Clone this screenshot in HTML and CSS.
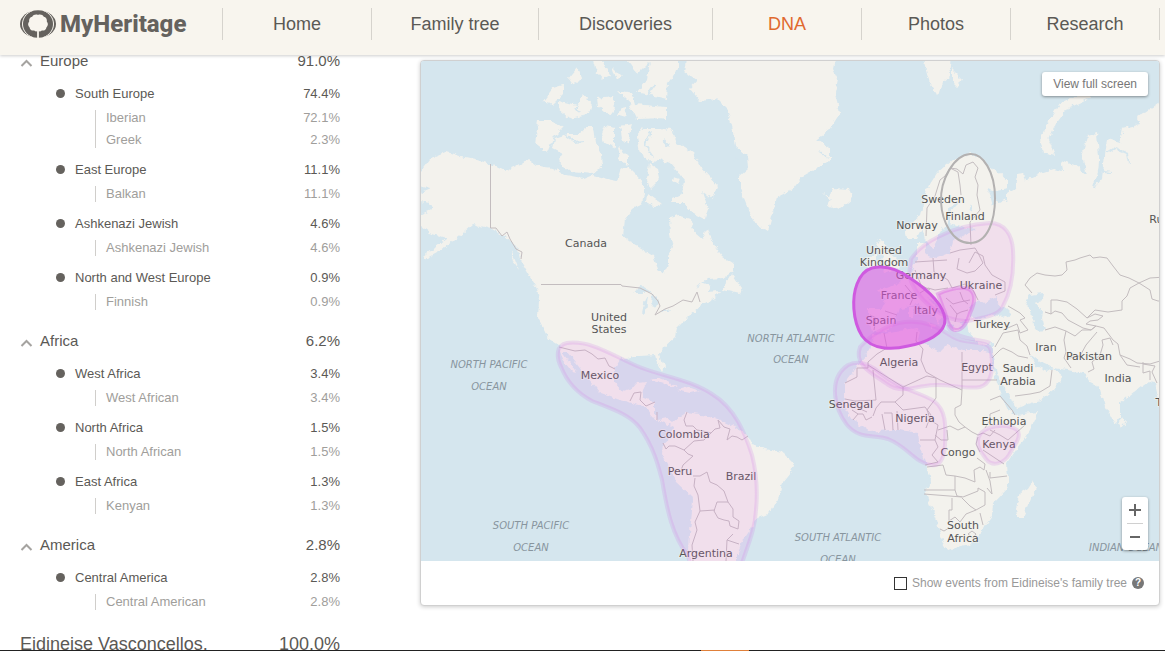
FILE: index.html
```html
<!DOCTYPE html>
<html lang="en">
<head>
<meta charset="utf-8">
<meta name="viewport" content="width=device-width, initial-scale=1">
<title>MyHeritage DNA – Ethnicity Estimate</title>
<link rel="stylesheet" href="styles.css">
</head>
<body>
<header class="topbar">
  <a class="logo" href="#" aria-label="MyHeritage">
    <svg class="logo-mark" viewBox="0 0 36 28" aria-hidden="true">
      <ellipse cx="18" cy="14" rx="18" ry="13.800" fill="#65625e"/>
      <path fill="none" stroke="#f8f5ee" stroke-width="1" d="M13 .4C-1 5.500-1 22.500 13 27.600M23 .4C37 5.500 37 22.500 23 27.600"/>
      <path fill="#f8f5ee" d="M18 5C20 3.900 22.800 4.800 23.800 6.800C26 7.200 27.400 9.400 26.800 11.600C28.400 13.200 28.200 16 26.400 17.400C26.200 19.600 24 21 21.800 20.400C20.900 21.400 19.800 21.600 18.900 21.300V28H17.100V21.300C16.200 21.600 15.100 21.400 14.200 20.400C12 21 9.800 19.600 9.600 17.400C7.800 16 7.600 13.200 9.200 11.600C8.600 9.400 10 7.200 12.200 6.800C13.200 4.800 16 3.900 18 5Z"/>
    </svg>
    <span class="logo-text">MyHeritage</span>
  </a>
  <nav class="nav">
    <a class="nav-item" href="#">Home</a>
    <a class="nav-item wide" href="#">Family tree</a>
    <a class="nav-item wider" href="#">Discoveries</a>
    <a class="nav-item active" href="#">DNA</a>
    <a class="nav-item" href="#">Photos</a>
    <a class="nav-item" href="#">Research</a>
  </nav>
</header>

<main class="content">
  <div class="estimate">
    <section class="continent">
      <h2 class="row continent-head"><button class="toggle"><svg class="chevron" viewBox="0 0 12 8" aria-hidden="true"><path d="M1 7L6 2L11 7"/></svg>Europe</button><span>91.0%</span></h2>
      <div class="group">
        <h3 class="row region"><span>South Europe</span><span>74.4%</span></h3>
        <ul class="ethnicities"><li class="row"><span>Iberian</span><span>72.1%</span></li><li class="row"><span>Greek</span><span>2.3%</span></li></ul>
      </div>
      <div class="group">
        <h3 class="row region"><span>East Europe</span><span>11.1%</span></h3>
        <ul class="ethnicities"><li class="row"><span>Balkan</span><span>11.1%</span></li></ul>
      </div>
      <div class="group">
        <h3 class="row region"><span>Ashkenazi Jewish</span><span>4.6%</span></h3>
        <ul class="ethnicities"><li class="row"><span>Ashkenazi Jewish</span><span>4.6%</span></li></ul>
      </div>
      <div class="group">
        <h3 class="row region"><span>North and West Europe</span><span>0.9%</span></h3>
        <ul class="ethnicities"><li class="row"><span>Finnish</span><span>0.9%</span></li></ul>
      </div>
    </section>
    <section class="continent">
      <h2 class="row continent-head"><button class="toggle"><svg class="chevron" viewBox="0 0 12 8" aria-hidden="true"><path d="M1 7L6 2L11 7"/></svg>Africa</button><span>6.2%</span></h2>
      <div class="group">
        <h3 class="row region"><span>West Africa</span><span>3.4%</span></h3>
        <ul class="ethnicities"><li class="row"><span>West African</span><span>3.4%</span></li></ul>
      </div>
      <div class="group">
        <h3 class="row region"><span>North Africa</span><span>1.5%</span></h3>
        <ul class="ethnicities"><li class="row"><span>North African</span><span>1.5%</span></li></ul>
      </div>
      <div class="group">
        <h3 class="row region"><span>East Africa</span><span>1.3%</span></h3>
        <ul class="ethnicities"><li class="row"><span>Kenyan</span><span>1.3%</span></li></ul>
      </div>
    </section>
    <section class="continent">
      <h2 class="row continent-head"><button class="toggle"><svg class="chevron" viewBox="0 0 12 8" aria-hidden="true"><path d="M1 7L6 2L11 7"/></svg>America</button><span>2.8%</span></h2>
      <div class="group">
        <h3 class="row region"><span>Central America</span><span>2.8%</span></h3>
        <ul class="ethnicities"><li class="row"><span>Central American</span><span>2.8%</span></li></ul>
      </div>
    </section>
    <p class="row total"><span>Eidineise Vasconcellos,</span><span>100.0%</span></p>
  </div>

  <section class="map-card">
    <div class="map">
      <svg class="map-svg" viewBox="421 61 738 500" preserveAspectRatio="xMidYMin slice" role="img" aria-label="Ethnicity map">
        <defs>
          <filter id="coast" x="0" y="0" width="100%" height="100%">
            <feTurbulence type="fractalNoise" baseFrequency="0.16" numOctaves="3" seed="4" result="n"/>
            <feDisplacementMap in="SourceGraphic" in2="n" scale="6" xChannelSelector="R" yChannelSelector="G"/>
          </filter>
        </defs>
        <g filter="url(#coast)">
          <rect x="411" y="51" width="758" height="520" fill="#d5e6ee"/>
          <g class="land">
            <!-- North and Central America, South America -->
            <path d="M411 175L421 171L430 159L447 152L460 156L475 159L490 164L505 171L517 166L528 159L537 166L553 168L567 176L583 179L593 175L607 179L617 181L620 171L627 166L637 176L644 184L644 193L642 203L633 209L625 219L623 236L637 246L653 256L658 269L665 274L668 264L668 256L673 249L670 233L669 218L680 216L690 219L695 233L702 239L708 228L713 243L722 256L733 263L733 271L723 278L707 279L696 288L705 283L710 285L708 292L720 291L715 298L703 304L700 307L690 315L683 322L677 328L675 337L663 348L660 355L664 367L662 371L657 362L655 355L640 356L633 356L620 360L615 368L615 383L622 391L633 388L637 383L647 382L643 390L642 397L655 402L655 415L658 420L667 418L673 423L680 417L687 412L707 415L720 420L737 428L747 435L752 445L770 450L783 453L793 463L790 473L782 483L778 500L770 512L758 517L750 530L740 545L737 553L737 571L688 571L690 533L693 500L692 497L677 483L667 463L662 453L663 443L670 437L672 427L665 423L655 420L653 417L647 408L633 403L620 400L600 393L592 383L583 372L567 352L562 352L577 373L572 372L563 360L558 345L550 340L545 330L538 317L539 300L537 288L520 259L517 246L507 238L492 229L473 224L463 233L453 241L440 251L423 260L423 257L440 244L447 238L430 233L421 226L421 214L433 209L430 203L421 201L411 201L421 193L430 189L411 183Z"/>
            <!-- Canadian Arctic -->
            <path d="M555 138L567 134L580 134L587 128L593 128L595 143L602 156L603 166L593 173L570 171L558 161L563 153L553 148ZM538 121L553 121L563 128L553 138L547 153L535 144ZM543 101L553 88L563 85L563 94L553 104ZM558 101L577 106L582 94L592 106L590 114L570 119L558 109ZM568 79L577 68L582 79L572 85ZM592 55L602 61L610 76L603 79L595 69ZM612 66L622 76L617 81ZM597 98L613 96L615 109L610 116L598 106ZM618 90L632 93L635 104L665 107L665 118L637 119L627 99ZM623 55L638 74L650 62L647 79L637 92L667 99L668 83L678 69L678 50ZM605 126L615 128L615 148L605 143L602 134ZM620 126L633 124L627 144L622 139ZM618 146L628 156L628 164L620 161ZM650 164L658 169L660 179L650 189L647 179ZM648 194L662 204L653 208L647 203ZM621 107L626 109L625 117L618 115ZM661 107L666 108L666 119L660 118Z"/>
            <path d="M643 128L660 128L673 131L677 143L693 153L702 169L717 186L712 199L702 191L708 209L705 219L690 211L683 203L670 203L672 198L683 193L685 181L670 163L660 159L653 163L640 153L637 136Z"/>
            <path d="M674 176L680 178L678 184L673 181ZM732 274L742 289L740 293L723 289ZM650 380L660 378L677 385L673 387ZM677 390L688 387L700 391L690 393ZM511 250L515 260L519 270L513 262Z"/>
            <!-- Greenland, Iceland, Svalbard, Novaya Zemlya -->
            <path d="M688 50L685 73L697 81L690 89L700 101L717 99L727 109L732 126L735 146L747 156L748 169L740 176L740 189L748 209L757 224L768 231L772 216L777 198L793 189L803 176L830 161L830 149L817 139L830 129L840 113L835 93L838 79L833 69L837 50ZM823 193L830 196L832 188L850 189L853 198L840 209L828 206L831 200Z"/>
            <path d="M922 55L952 55L950 76L942 83L938 96L930 84ZM952 69L962 79L957 88L952 83ZM1040 138L1050 119L1060 103L1073 97L1088 94L1090 98L1067 109L1053 128L1048 139L1055 156L1043 153Z"/>
            <!-- Europe and Asia -->
            <path d="M907 238L905 229L920 216L927 189L937 173L953 159L970 154L983 159L987 166L997 171L1008 181L1008 189L997 191L987 188L992 198L1000 203L1007 199L1007 193L1015 188L1017 174L1023 173L1025 181L1040 173L1053 169L1063 171L1061 160L1077 166L1087 174L1082 156L1088 136L1097 133L1099 156L1099 173L1094 188L1102 179L1105 156L1107 139L1120 143L1123 128L1140 124L1137 118L1159 103L1172 100L1172 410L1159 400L1155 383L1147 382L1140 387L1120 403L1120 417L1115 423L1105 407L1099 387L1090 383L1085 373L1068 370L1053 368L1040 362L1030 354L1036 366L1047 371L1052 368L1063 377L1053 390L1040 400L1017 408L1007 393L997 373L993 357L993 343L980 345L973 338L968 330L967 320L962 322L960 330L955 332L950 320L943 310L933 300L928 298L935 306L945 317L940 318L939 325L933 315L923 307L917 305L900 308L897 317L890 330L880 332L870 330L868 313L868 308L883 308L887 300L877 290L887 288L900 282L910 273L917 260L917 243L925 243L927 256L937 258L950 253L953 241L963 236L977 229L960 227L950 224L950 213L962 199L955 203L947 209L947 223L937 238L932 248L925 239L922 229L917 238Z"/>
            <path d="M876 246L880 239L885 241L885 249L895 258L900 268L885 272L882 262L884 256ZM868 258L877 254L877 266L868 268ZM926 322L936 324L933 329ZM909 308L914 308L913 318L909 318Z"/>
            <!-- Africa, Madagascar, Sri Lanka -->
            <path d="M873 335L890 333L915 328L920 332L918 340L930 347L940 352L947 345L963 350L983 350L990 353L992 365L997 383L1003 400L1008 410L1017 415L1038 412L1030 430L1007 463L1008 477L1008 487L993 503L992 517L983 530L970 545L947 550L943 543L935 517L925 493L931 480L927 465L920 447L918 433L900 430L890 430L870 432L853 420L845 407L845 383L857 367L868 353Z"/>
            <path d="M1033 480L1036 487L1023 518L1017 518L1016 507L1020 493L1028 488ZM1122 417L1126 423L1122 428L1119 423Z"/>
          </g>
          <g fill="#d5e6ee">
            <path d="M1030 295L1043 293L1042 300L1035 302L1043 312L1042 317L1045 330L1038 331L1033 325L1032 315L1025 303Z"/>
            <path d="M971 305L978 300L985 304L992 299L998 297L996 304L1006 309L1012 315L1002 318L990 315L980 319L970 317Z"/>
            <path d="M632 293L643 286L652 292L643 293ZM645 299L648 296L646 312L642 314ZM652 293L659 300L655 309L651 303ZM660 312L670 309L668 312ZM988 191L997 204L992 205Z"/>
          </g>
          <g class="water-line">
            <path d="M1099 140L1101 150L1099 172L1094 188M1107 153L1115 148L1127 153L1129 163M1103 171L1112 172M970 211L972 204M650 132L645 145L653 156M655 85L648 95M580 112L576 107"/>
            <path d="M563 134L574 142L585 141M663 140L668 145M745 157L735 160M819 152L828 158"/>
          </g>
        </g>
        <!-- Country borders -->
        <g class="borders">
          <path d="M490.500 164V228L496 228L502 236L507 232L510 239L516 249L522 252L521 259M541 284.500H621L622 286L640 288L652 294L658 301L660 306L655 315L665 309L673 306L683 300L692 302L697 292L700 302M559 347L575 351L585 350L592 354L598 359L605 358L609 366L615 369"/>
          <path d="M630 401L634 393L641 392L640 400L646 406L655 402M657 420V412"/>
          <path d="M687 412L684 420L686 426L693 426L697 430L703 431L711 433L715 429L720 428L718 420L724 427L730 429L727 440L732 436L737 437L742 440L748 436M663 443L666 449L669 446L675 446L684 450L688 454L693 456L683 465L680 473M684 450L694 441L704 440L711 433M693 476L700 476L707 472L710 482L717 485L724 491L728 502L717 502L714 511L718 518L724 520L729 521L730 526L738 529L739 521L733 517L733 509L728 502M695 478L694 486L698 495L700 511L715 510M700 511L695 522L697 530L692 545L693 561M733 534L727 540L739 544M727 540L726 561"/>
          <path d="M926 236L927 208L935 196L940 180L945 176L950 168L958 172L960 185L961 195M950 168L957 169L963 174L966 165L973 162L978 168L975 177L978 185L977 195L980 210L970 222L971 245M933 258L934 272L940 275M915 262L947 260M950 253L960 250L975 248L978 253L983 263L975 271L967 273L957 269L959 258M969 263L975 252L983 256L985 265L992 275L1005 282L1005 291L995 295M940 275L948 280L952 288L965 284L973 290L978 300M915 270L921 285L930 290M905 285L914 296L910 305M920 293L928 288L935 290L948 288"/>
          <path d="M885 311L897 315M870 315L876 318L874 330M946 298L953 304L960 302L970 300M950 305L957 314L961 312L968 310M960 292L963 300L968 304M957 314L955 322"/>
          <path d="M884 333L887 348L877 354L868 362V368H857V377L845 383M917 332L916 341L923 349L921 360L926 372L940 380L962 390V352M868 365L903 387L927 376L936 378M873 370L876 400L855 401M962 380H997M962 390L961 405L955 408V415L959 422L965 427L972 432M936 378L936 398L927 410L929 415M903 387V395L895 402L903 410L925 407L931 415L926 428M845 399L855 401L858 408L867 412"/>
          <path d="M853 420L858 414L863 414L866 420L872 417M858 414L852 410M873 416L876 408L881 402L895 402M882 414L885 430M884 413H892L893 430M897 411L898 430M928 413L930 420L938 425L935 440M938 430L950 426L958 430L965 427M935 435L941 440L948 440L947 430M920 440H935L938 447L932 455L938 462L925 465M972 432L978 435L983 433L990 436L995 430M1000 410L990 414V420L985 428M990 400L1000 396L1012 410L1015 415M990 430L1000 435L1008 440L1025 425M978 437L976 444L980 452M983 450L1004 464"/>
          <path d="M927 467L943 465L946 475L955 476V490H924M955 476L965 478L975 482L974 470L980 467L984 470L985 464L977 458M990 472L990 478L1007 476M955 490L957 496L963 497L978 491L978 488L985 492L985 505L976 510L970 506L962 498M924 494L962 497M952 498V510H949V521M949 521L955 517L960 522L966 514L976 510M940 529L944 531L949 528M980 513L983 525M968 534L972 531L976 534L973 538ZM986 470L990 481L992 494L987 488"/>
          <path d="M1032 293L1025 285L1030 278L1037 273L1045 275L1055 276L1062 275L1067 270L1066 262L1075 260L1080 258L1090 255L1093 258L1100 257L1107 258L1113 266L1120 275L1129 278L1139 283L1130 288L1127 296L1122 301V310L1108 312L1095 310L1087 318L1077 309L1067 302L1057 300L1051 300V314L1045 312M1139 283L1150 278L1165 277M1139 283L1150 290L1152 299L1158 301L1165 301M1051 314L1055 311L1062 313L1068 320L1083 328L1091 330L1096 326L1104 328L1113 340L1118 344L1120 355L1130 359L1137 363L1150 364L1160 361M1120 355L1127 365L1140 367M1045 330L1055 327L1066 331L1075 336L1082 330L1091 330L1096 326M1066 331L1064 340L1066 352L1064 358L1071 368M1069 358L1080 356L1086 345L1097 332"/>
          <path d="M1088 372L1094 369L1092 362L1100 355L1103 345L1102 340L1110 338L1113 345M1003 330L1010 327L1017 324L1020 333L1028 330M1008 306L1020 313L1025 318L1020 320L1028 330M995 347L1003 333L1018 330L1020 340L1027 346L1030 355M992 358L1000 350L1003 348L1012 352L1018 356L1028 358M1015 396L1030 394L1040 392L1050 386L1052 370M1143 362V373L1150 371V380M1143 364L1155 366L1152 372L1157 383M1087 318L1095 314L1103 316L1098 320L1090 321L1086 324L1096 326"/>
        </g>
        <g class="places">
          <text x="586" y="247">Canada</text>
          <text x="609" y="321">United<tspan x="609" dy="12">States</tspan></text>
          <text x="600" y="379">Mexico</text>
          <text x="684" y="438">Colombia</text>
          <text x="680" y="475">Peru</text>
          <text x="741" y="480">Brazil</text>
          <text x="706" y="557">Argentina</text>
          <text x="943" y="203">Sweden</text>
          <text x="965" y="220">Finland</text>
          <text x="917" y="229">Norway</text>
          <text x="884" y="254">United<tspan x="884" dy="12">Kingdom</tspan></text>
          <text x="921" y="279">Germany</text>
          <text x="981" y="289">Ukraine</text>
          <text x="899" y="299">France</text>
          <text x="926" y="314">Italy</text>
          <text x="881" y="324">Spain</text>
          <text x="992" y="328">Turkey</text>
          <text x="899" y="366">Algeria</text>
          <text x="977" y="371">Egypt</text>
          <text x="1018" y="372">Saudi<tspan x="1018" dy="13">Arabia</tspan></text>
          <text x="1046" y="351">Iran</text>
          <text x="1089" y="360">Pakistan</text>
          <text x="1118" y="382">India</text>
          <text x="851" y="408">Senegal</text>
          <text x="915" y="422">Nigeria</text>
          <text x="1004" y="425">Ethiopia</text>
          <text x="999" y="448">Kenya</text>
          <text x="958" y="456">Congo</text>
          <text x="963" y="529">South<tspan x="963" dy="13">Africa</tspan></text>
          <text x="1167" y="223">Russia</text>
          <text x="1179" y="406">Thailand</text>
        </g>
        <g class="oceans">
          <text x="489" y="368">NORTH PACIFIC<tspan x="489" dy="22">OCEAN</tspan></text>
          <text x="531" y="529">SOUTH PACIFIC<tspan x="531" dy="22">OCEAN</tspan></text>
          <text x="791" y="342">NORTH ATLANTIC<tspan x="791" dy="21">OCEAN</tspan></text>
          <text x="838" y="541">SOUTH ATLANTIC<tspan x="838" dy="22">OCEAN</tspan></text>
          <text x="1126" y="551">INDIAN OCEAN</text>
        </g>
        <!-- Ethnicity regions -->
        <g class="zone">
          <path d="M742 563C748 545 755 530 756 510C758 490 757 475 752 455C745 433 735 408 712 394C690 379 660 376 637 366C610 354 590 340 567 343C556 345 556 357 561 367C567 382 577 393 592 401C615 410 630 415 640 428C654 448 658 465 662 480C667 510 672 535 688 556L690 563Z"/>
          <path d="M911 259C917 250 925 243 940 236C955 228 975 224 990 223C1005 223 1012 235 1013 250C1014 268 1012 290 1003 306C998 317 980 318 967 321C945 322 915 300 909 275Z"/>
          <path d="M860 347C868 338 885 324 905 322C925 320 938 327 953 337C968 346 990 338 991 352C993 365 994 383 980 387C965 390 945 382 925 386C910 388 900 393 887 384C875 375 853 366 860 347Z"/>
          <path d="M848 365C857 361 868 362 880 373C900 390 920 392 934 401C946 410 946 425 945 445C944 460 939 467 931 465C915 463 908 447 888 439C873 434 860 440 847 425C836 411 826 380 848 365Z"/>
          <path d="M979 436C984 426 1006 422 1017 430C1023 436 1013 447 1009 455C1003 464 992 467 986 459C982 453 975 446 979 436Z"/>
          <path class="greek" d="M948 325C948 338 985 340 990 343"/>
        </g>
        <path class="zone-mid" d="M938 294C947 290 960 286 969 289C977 294 974 305 970 313C967 323 962 331 955 330C947 328 947 315 943 308Z"/>
        <path class="zone-strong" d="M872 268C884 265 898 269 910 278C925 288 943 303 945 319C946 334 925 343 908 346C892 350 872 350 862 336C852 320 852 297 857 284C860 276 865 270 872 268Z"/>
        <path class="zone-finnish" d="M970 154C983 153 995 172 995 198C995 220 988 243 970 243C952 243 942 221 941 202C940 180 954 155 970 154Z"/>
      </svg>
      <button class="fullscreen">View full screen</button>
      <div class="zoom-control">
        <button class="zoom-button" aria-label="Zoom in"><svg viewBox="0 0 12 12" aria-hidden="true"><path d="M6 0V12M0 6H12"/></svg></button>
        <button class="zoom-button" aria-label="Zoom out"><svg viewBox="0 0 12 12" aria-hidden="true"><path d="M1 6H11"/></svg></button>
      </div>
    </div>
    <div class="map-options">
      <input class="events-check" type="checkbox" id="events">
      <label for="events">Show events from Eidineise's family tree</label>
      <button class="help" aria-label="Help">?</button>
    </div>
  </section>
</main>
<footer class="taskbar"><span class="taskbar-active"></span></footer>
</body>
</html>
```
FILE: styles.css
```css
* { box-sizing: border-box; }

body {
  margin: 0;
  height: 100vh;
  overflow: hidden;
  display: grid;
  grid-template-rows: 55px minmax(0, 1fr) 1px;
  font-family: "Liberation Sans", Arial, sans-serif;
  font-size: 13px;
  color: #5b5955;
  background: #fff;
}

button { font: inherit; color: inherit; border: 0; padding: 0; background: none; cursor: pointer; }
h2, h3, p, ul { margin: 0; padding: 0; font-weight: normal; list-style: none; }

/* Header */
.topbar {
  display: flex;
  align-items: flex-start;
  padding: 8px 5px 0 20px;
  background: #f8f5ee;
  box-shadow: 0 1px 3px rgba(0, 0, 0, .2);
}
.logo {
  display: flex;
  gap: 4px;
  flex: 0 0 202px;
  height: 32px;
  align-items: center;
  color: #65625e;
  text-decoration: none;
}
.logo-mark { width: 36px; height: 28px; }
.logo-text { font: 800 24px/32px Roboto, "Open Sans", sans-serif; }
.nav { display: flex; flex: 1; border-right: 1px solid #d6d3cd; }
.nav-item {
  flex: 149 1 0;
  height: 32px;
  border-left: 1px solid #d6d3cd;
  font-size: 18px;
  line-height: 32px;
  text-align: center;
  color: #5b5955;
  text-decoration: none;
  white-space: nowrap;
}
.nav-item.wide { flex-grow: 167; }
.nav-item.wider { flex-grow: 174; }
.nav-item.active { color: #e0692f; }

/* Page body */
.content {
  display: grid;
  grid-template-columns: 320px minmax(0, 1fr);
  gap: 80px;
  padding: 0 5px 0 20px;
  align-items: start;
}

/* Estimate list */
.row { display: flex; justify-content: space-between; }
.continent + .continent { margin-top: 25px; }
.continent-head { font-size: 15px; line-height: 12px; margin-bottom: 14px; }
.toggle { display: flex; align-items: center; gap: 7px; line-height: 12px; }
.chevron { width: 13px; height: 8px; margin-top: 3px; fill: none; stroke: #a5a3a0; stroke-width: 2; }
.group + .group { margin-top: 9px; }
.region { position: relative; padding-left: 55px; font-size: 13px; line-height: 26px; }
.region::before {
  content: "";
  position: absolute;
  left: 36px;
  top: 8px;
  width: 9px;
  height: 9px;
  border-radius: 50%;
  background: #65625e;
}
.ethnicities {
  display: grid;
  gap: 6px;
  margin: 3px 0 0 75px;
  padding-left: 10px;
  border-left: 1px solid #d0cecb;
  line-height: 16px;
  color: #a09e9b;
}
.total { margin-top: 24px; font-size: 18px; line-height: 20px; }

/* Map */
.map-card {
  margin-top: 5px;
  border: 1px solid #d0d0d0;
  border-radius: 4px;
  background: #fff;
  box-shadow: 0 1px 4px rgba(0, 0, 0, .2);
}
.map { position: relative; height: 500px; overflow: hidden; border-radius: 3px 3px 0 0; background: #d5e6ee; }
.map-svg { display: block; width: 100%; height: 100%; }
.land { fill: #f3f2ed; }
.borders { fill: none; stroke: #c3bdbf; stroke-width: 1; stroke-linejoin: round; }
.water-line { fill: none; stroke: #d5e6ee; stroke-width: 2; }
.places, .oceans { font-family: "DejaVu Sans", sans-serif; text-anchor: middle; }
.places { font-size: 11px; fill: #555; stroke: rgba(243, 242, 237, .6); stroke-width: 2px; paint-order: stroke; }
.oceans { font-size: 10px; font-style: italic; fill: #88959e; }
.zone { fill: rgba(230, 100, 230, .13); stroke: rgba(205, 120, 230, .2); stroke-width: 4; }
.greek { fill: none; }
.zone-mid { fill: rgba(225, 90, 225, .3); stroke: rgba(215, 90, 225, .35); stroke-width: 4; }
.zone-strong { fill: rgba(225, 80, 225, .55); stroke: #cf5ae0; stroke-width: 3; }
.zone-finnish { fill: none; stroke: #b3b1b1; stroke-width: 2; }

.fullscreen {
  position: absolute;
  top: 11px;
  right: 11px;
  height: 24px;
  padding: 0 11px;
  border-radius: 3px;
  background: #fff;
  box-shadow: 0 1px 3px rgba(0, 0, 0, .4);
  font-size: 12px;
  color: #777;
}
.zoom-control {
  position: absolute;
  right: 11px;
  bottom: 11px;
  width: 26px;
  padding: 0 5px;
  border-radius: 3px;
  background: #fff;
  box-shadow: 0 1px 3px rgba(0, 0, 0, .4);
}
.zoom-button { display: grid; place-items: center; width: 100%; height: 26px; }
.zoom-button + .zoom-button { height: 27px; border-top: 1px solid #d0d0d0; }
.zoom-button svg { width: 12px; height: 12px; stroke: #666; stroke-width: 2; }

.map-options {
  display: flex;
  align-items: center;
  justify-content: flex-end;
  gap: 5px;
  height: 44px;
  padding-right: 15px;
  font-size: 12px;
  color: #999;
}
.events-check { appearance: none; width: 13px; height: 13px; margin: 0; border: 1px solid #333; background: #fff; }
.help {
  width: 12px;
  height: 12px;
  border-radius: 50%;
  background: #777;
  color: #fff;
  font-size: 10px;
  font-weight: bold;
  line-height: 12px;
}

.taskbar { position: relative; display: flex; justify-content: center; background: #222; }
.taskbar-active { width: 48px; margin-left: 285px; background: #e0803a; }
```
